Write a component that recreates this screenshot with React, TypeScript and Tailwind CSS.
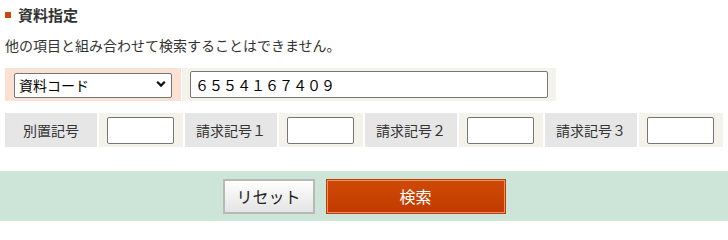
import { useState } from "react"

const FONT = '"Noto Sans CJK JP", "Noto Sans", sans-serif'

function LabelCell({ children }: { children: React.ReactNode }) {
  return (
    <div className="flex w-[92px] shrink-0 items-center justify-center bg-[#e6e6e6] text-[14px] text-[#333]">
      {children}
    </div>
  )
}

function InputCell() {
  return (
    <div className="flex w-[84px] shrink-0 items-center bg-[#f3f2eb] pl-[8px]">
      <input
        type="text"
        className="h-[27px] w-[67px] rounded-[2px] border border-[#767676] bg-white px-1 text-[14px] outline-none"
      />
    </div>
  )
}

export default function App() {
  const [code, setCode] = useState("６５５４１６７４０９")

  return (
    <div className="w-[728px] bg-white text-[#333]" style={{ fontFamily: FONT }}>
      <div className="px-[5px]">
        {/* Heading */}
        <div className="flex h-[29px] items-center gap-[7px]">
          <span className="size-[6px] bg-[#c9490a]" />
          <h2 className="text-[15px] font-bold leading-none text-[#333]">資料指定</h2>
        </div>

        <p className="mt-[5px] h-[22px] text-[14px] leading-[22px]">
          他の項目と組み合わせて検索することはできません。
        </p>

        {/* Row 1 */}
        <div className="mt-[12px] flex h-[33px] gap-[1px]">
          <div className="flex w-[176px] shrink-0 items-center bg-[#fbe0d4] pl-[9px]">
            <div className="relative">
              <select className="h-[25px] w-[158px] appearance-none rounded-[2px] border border-[#767676] bg-white pl-[4px] text-[14px] text-black outline-none">
                <option>資料コード</option>
                <option>ISBN</option>
                <option>ISSN</option>
              </select>
              <svg
                className="pointer-events-none absolute right-[6px] top-[8px]"
                width="10"
                height="8"
                viewBox="0 0 10 8"
              >
                <path d="M1.2 1.8 L5 5.6 L8.8 1.8" fill="none" stroke="#111" strokeWidth="2.2" />
              </svg>
            </div>
          </div>
          <div className="flex w-[374px] shrink-0 items-center bg-[#f3f2eb] pl-[8px]">
            <input
              type="text"
              value={code}
              onChange={(e) => setCode(e.target.value)}
              className="h-[27px] w-[358px] rounded-[2px] border border-[#767676] bg-white px-[4px] text-[14px] text-black outline-none"
            />
          </div>
        </div>

        {/* Row 2 */}
        <div className="mt-[12px] flex h-[34px] gap-[2px]">
          <LabelCell>別置記号</LabelCell>
          <InputCell />
          <LabelCell>請求記号１</LabelCell>
          <InputCell />
          <LabelCell>請求記号２</LabelCell>
          <InputCell />
          <LabelCell>請求記号３</LabelCell>
          <InputCell />
        </div>
      </div>

      {/* Footer */}
      <div className="mt-[24px] flex h-[50px] items-center justify-center gap-[11px] bg-[#cde5d9]">
        <button className="h-[35px] w-[92px] border-2 border-[#b8b8b8] bg-gradient-to-b from-white to-[#e4e4e4] text-[16px] text-[#222]">
          リセット
        </button>
        <button className="h-[35px] w-[180px] border border-[#c23c00] bg-gradient-to-b from-[#d04a06] to-[#c03a00] text-[16px] text-white shadow-[inset_0_0_0_1px_#e8906a]">
          検索
        </button>
      </div>
    </div>
  )
}
